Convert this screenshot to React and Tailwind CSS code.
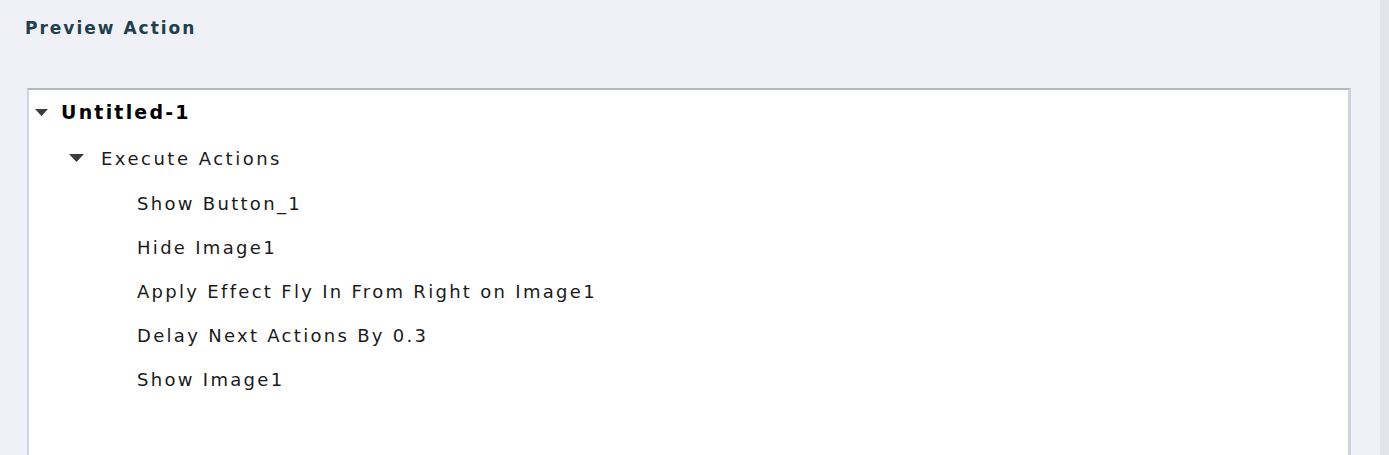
const actions = [
  'Show Button_1',
  'Hide Image1',
  'Apply Effect Fly In From Right on Image1',
  'Delay Next Actions By 0.3',
  'Show Image1',
];

function Caret({ className }) {
  return (
    <svg viewBox="0 0 14 8" preserveAspectRatio="none" className={className}>
      <path d="M0 0h14L7 8z" fill="#3c3c3c" />
    </svg>
  );
}

export default function App() {
  return (
    <div
      className="flex h-[455px] w-[1389px] overflow-hidden bg-[#f0f1f6]"
      style={{ fontFamily: '"DejaVu Sans", Verdana, sans-serif' }}
    >
      <div className="flex flex-1 flex-col">
        <h1 className="h-[88px] shrink-0 pl-[25px] pt-[17px] text-[17px] leading-[22px] font-bold tracking-[2px] text-[#1d3f4e]">
          Preview Action
        </h1>
        <div className="ml-[27px] mr-[29px] h-[400px] shrink-0 border-l-2 border-r-[3px] border-t-2 border-l-[#d3d4d8] border-r-[#d3d4d8] border-t-[#b6b7bb] bg-white">
          <div className="flex h-[45px] items-center pl-[6px]">
            <Caret className="mr-[13px] h-[7px] w-[13px]" />
            <span className="text-[19px] font-bold tracking-[2.2px] text-black">Untitled-1</span>
          </div>
          <div className="flex h-[46px] items-center pl-[40px]">
            <Caret className="mr-[17px] h-[8px] w-[15px]" />
            <span className="text-[18px] tracking-[2.5px] text-[#1a1a1a]">Execute Actions</span>
          </div>
          {actions.map((a) => (
            <div key={a} className="flex h-[44px] items-center pl-[108px] text-[18px] tracking-[2.3px] text-[#1a1a1a]">
              {a}
            </div>
          ))}
        </div>
      </div>
      <div className="w-[9px] bg-[#e4e5ea]" />
    </div>
  );
}
